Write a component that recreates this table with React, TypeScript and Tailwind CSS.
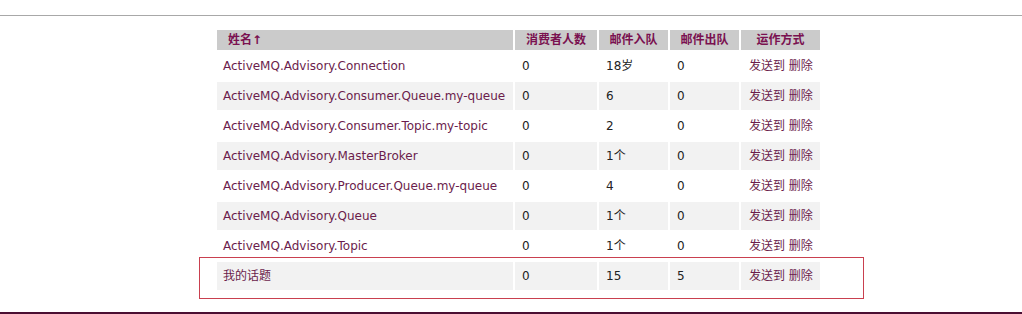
type Topic = {
  name: string;
  consumers: string;
  enqueued: string;
  dequeued: string;
};

const topics: Topic[] = [
  { name: "ActiveMQ.Advisory.Connection", consumers: "0", enqueued: "18岁", dequeued: "0" },
  { name: "ActiveMQ.Advisory.Consumer.Queue.my-queue", consumers: "0", enqueued: "6", dequeued: "0" },
  { name: "ActiveMQ.Advisory.Consumer.Topic.my-topic", consumers: "0", enqueued: "2", dequeued: "0" },
  { name: "ActiveMQ.Advisory.MasterBroker", consumers: "0", enqueued: "1个", dequeued: "0" },
  { name: "ActiveMQ.Advisory.Producer.Queue.my-queue", consumers: "0", enqueued: "4", dequeued: "0" },
  { name: "ActiveMQ.Advisory.Queue", consumers: "0", enqueued: "1个", dequeued: "0" },
  { name: "ActiveMQ.Advisory.Topic", consumers: "0", enqueued: "1个", dequeued: "0" },
  { name: "我的话题", consumers: "0", enqueued: "15", dequeued: "5" },
];

const font = { fontFamily: '"DejaVu Sans", "Noto Sans CJK SC", sans-serif' };

export default function App() {
  return (
    <div className="w-[1022px] h-[314px] bg-white overflow-hidden flex flex-col text-[12px]" style={font}>
      <div className="mt-[15px] h-px bg-[#a8a8a8]" />

      <div className="relative ml-[215px] mt-[12px]">
        <table className="border-separate border-spacing-[2px] table-fixed">
          <thead>
            <tr className="h-[20px] bg-[#cbcbcb] text-[#7a1150] font-bold text-[12px]">
              <th className="w-[296px] text-left pl-[11px] font-bold">姓名↑</th>
              <th className="w-[82px] text-center font-bold">消费者人数</th>
              <th className="w-[69px] text-center font-bold">邮件入队</th>
              <th className="w-[69px] text-center font-bold">邮件出队</th>
              <th className="w-[79px] text-center font-bold">运作方式</th>
            </tr>
          </thead>
          <tbody>
            {topics.map((t, i) => (
              <tr key={t.name} className={`h-[28px] ${i % 2 === 1 ? "bg-[#f2f2f2]" : "bg-white"}`}>
                <td className="pl-[6px] text-[#6b1d4c] whitespace-nowrap">{t.name}</td>
                <td className="pl-[7px] text-[#222]">{t.consumers}</td>
                <td className="pl-[7px] text-[#222]">{t.enqueued}</td>
                <td className="pl-[7px] text-[#222]">{t.dequeued}</td>
                <td className="pl-[8px] text-[#6b1d4c] whitespace-nowrap">
                  <a>发送到</a> <a>删除</a>
                </td>
              </tr>
            ))}
          </tbody>
        </table>

        {/* highlight around the last topic */}
        <div className="absolute left-[-16px] top-[229px] w-[665px] h-[42px] border border-[#c9404f] pointer-events-none" />
      </div>

      <div className="mt-auto h-[2px] bg-[#4b0f33]" />
    </div>
  );
}
